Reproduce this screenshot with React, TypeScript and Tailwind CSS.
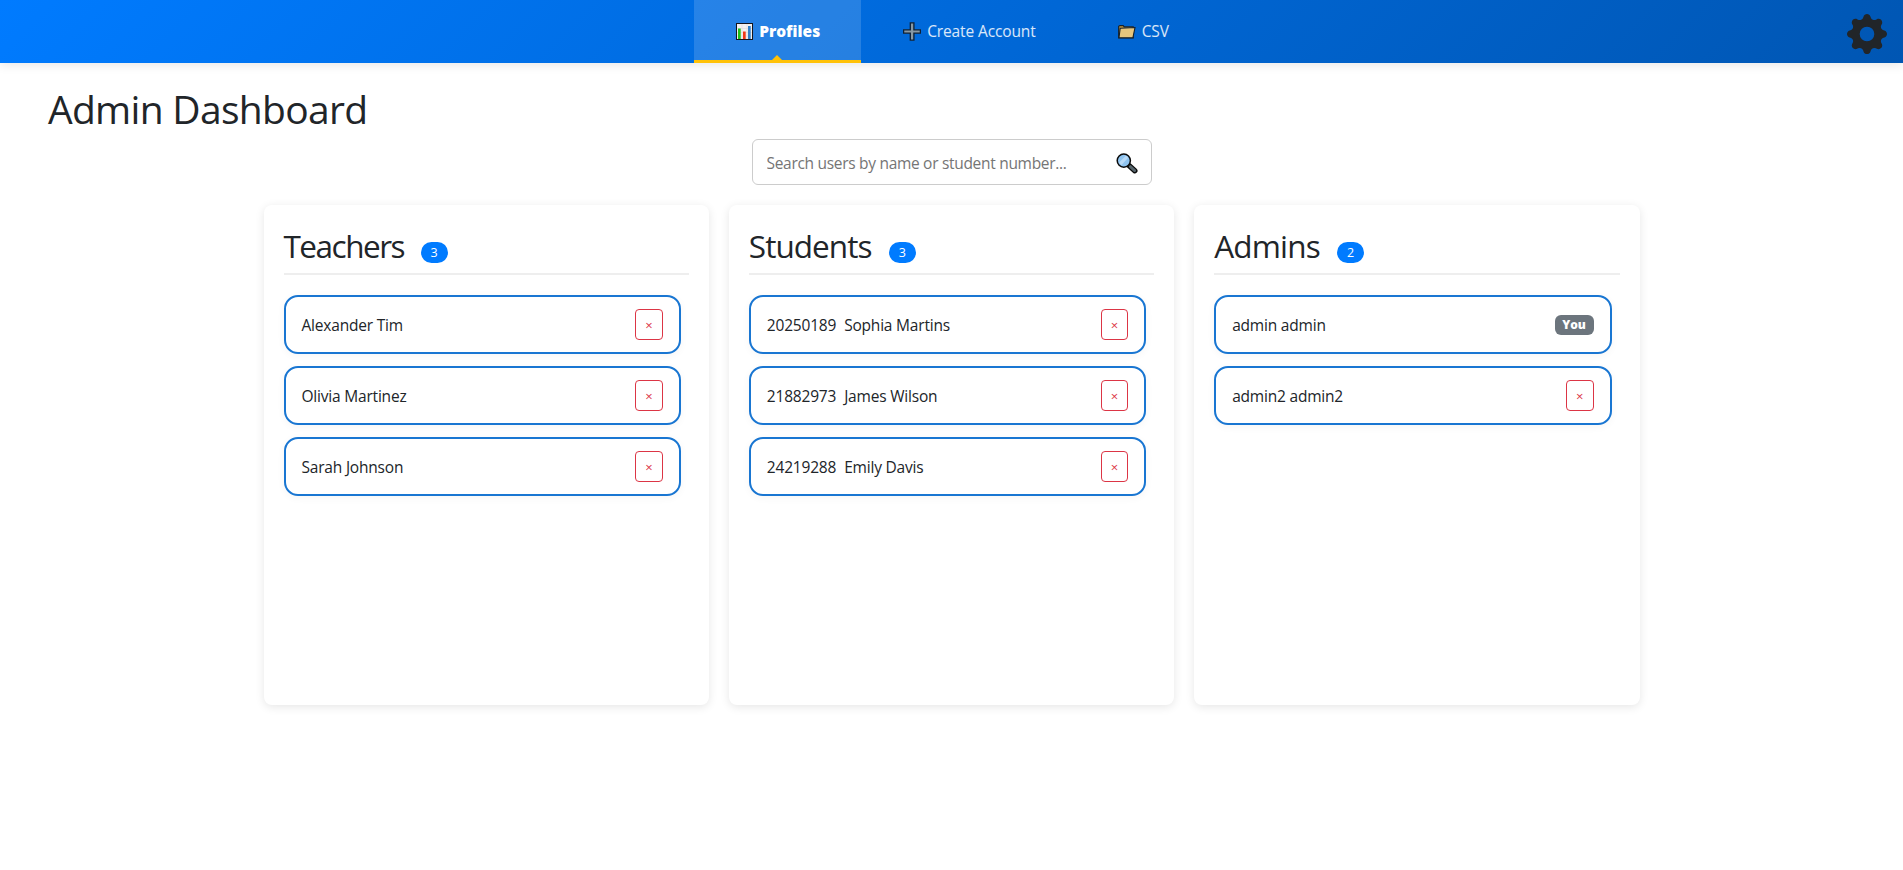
import { BsGearFill } from "react-icons/bs";
import type { ReactNode } from "react";

function ChartIcon() {
  return (
    <svg width="17" height="17" viewBox="0 0 17 17">
      <rect x="0.5" y="0.5" width="16" height="16" fill="#f3f1f1" stroke="#14141c" />
      <path d="M1 5.5h15M1 9.5h15M1 13h15M6 1v15M11 1v15" stroke="#dedcde" strokeWidth="0.6" />
      <rect x="2" y="5.5" width="2.7" height="10.5" fill="#1fc019" />
      <rect x="7" y="8.5" width="2.7" height="7.5" fill="#f03a17" />
      <rect x="12" y="3" width="2.7" height="13" fill="#3180c8" />
    </svg>
  );
}

function PlusIcon() {
  return (
    <svg width="18" height="19" viewBox="0 0 18 19">
      <path
        d="M7.3 .8h3.6v7h6.5v3.4h-6.5v7H7.3v-7H.6V7.8h6.7z"
        fill="#8899a4"
        stroke="#0c2036"
        strokeWidth="1.3"
      />
    </svg>
  );
}

function FolderIcon() {
  return (
    <svg width="18" height="14" viewBox="0 0 18 14">
      <path d="M.7 13V1.3l1.2-.7h3.3l1 1.2h9V13z" fill="#c99a3c" stroke="#14202c" strokeWidth="1.2" />
      <path d="M2.2 3.2 17 2.5 14.9 12.8H1z" fill="#e6c67d" stroke="#14202c" strokeWidth="1.1" />
    </svg>
  );
}

function SearchIcon() {
  return (
    <svg width="22" height="21" viewBox="0 0 22 21">
      <path d="m13 12.5 5.8 5.2" stroke="#0b0b0b" strokeWidth="5.4" strokeLinecap="round" />
      <path d="m14.3 13.6 4.4 4" stroke="#56656c" strokeWidth="2.8" strokeLinecap="round" />
      <circle cx="7.8" cy="7.6" r="6.6" fill="#8fc4f0" stroke="#0b0b0b" strokeWidth="1.5" />
      <path d="M3.2 9.5 9.8 2.8a5.4 5.4 0 0 1 2.4 2L5.5 12a5 5 0 0 1-2.3-2.5z" fill="#b9dbf8" />
    </svg>
  );
}

function Tab({ icon, label, active }: { icon: ReactNode; label: string; active?: boolean }) {
  if (active) {
    return (
      <button className="relative flex h-[63px] w-[167px] items-center border-b-[3px] border-[#ffc107] bg-white/15 pl-[42px] pt-[3px] text-[15.5px] font-extrabold text-white">
        {icon}
        <span className="ml-[6px] whitespace-nowrap pt-px">{label}</span>
        <span className="absolute bottom-0 left-[78px] h-0 w-0 border-x-[5px] border-b-[5px] border-x-transparent border-b-[#ffc107]" />
      </button>
    );
  }
  return (
    <button className="flex h-[63px] items-center pl-[42px] pr-[40px] text-[15.5px] tracking-[-0.12px] text-white/85">
      {icon}
      <span className="ml-[6px] whitespace-nowrap pt-px">{label}</span>
    </button>
  );
}

type Person = { id?: string; name: string; self?: boolean };

function PersonRow({ person }: { person: Person }) {
  return (
    <li className="flex h-[59px] items-center justify-between rounded-[14px] border-2 border-[#1976d2] bg-white px-4 shadow-[0_2px_8px_rgba(0,0,0,0.04)]">
      <span className="flex gap-2 pt-[2px] text-[15.5px] tracking-[-0.2px]">
        {person.id && <span>{person.id}</span>}
        <span>{person.name}</span>
      </span>
      {person.self ? (
        <span className="flex h-5 w-[39px] items-center justify-center rounded-md bg-[#6c757d] pt-px text-[12px] font-extrabold text-white">
          You
        </span>
      ) : (
        <button className="flex h-[31px] w-[27.6px] items-center justify-center rounded border border-[#dc3545] pt-[2px] text-[13px] font-medium text-[#dc3545]">
          ×
        </button>
      )}
    </li>
  );
}

function Column({ title, people, titleClass }: { title: string; people: Person[]; titleClass: string }) {
  return (
    <section className="h-[500px] rounded-lg bg-white p-5 shadow-[0_2px_10px_rgba(0,0,0,0.1)]">
      <div className="flex h-[50px] items-start border-b-2 border-[#eee]">
        <h2 className={titleClass}>{title}</h2>
        <span className="mt-[17px] flex h-[21px] w-[27px] items-center justify-center rounded-xl bg-[#007bff] pt-[2px] text-[12.5px] text-white">
          {people.length}
        </span>
      </div>
      <ul className="mr-2 mt-5 flex flex-col gap-3">
        {people.map((p) => (
          <PersonRow key={p.name} person={p} />
        ))}
      </ul>
    </section>
  );
}

const teachers: Person[] = [{ name: "Alexander Tim" }, { name: "Olivia Martinez" }, { name: "Sarah Johnson" }];
const students: Person[] = [
  { id: "20250189", name: "Sophia Martins" },
  { id: "21882973", name: "James Wilson" },
  { id: "24219288", name: "Emily Davis" },
];
const admins: Person[] = [{ name: "admin admin", self: true }, { name: "admin2 admin2" }];

export default function App() {
  return (
    <div className="min-h-screen bg-white font-['Open_Sans','Noto_Sans',sans-serif] text-[#212529]">
      <header className="relative flex h-[63px] justify-center bg-[linear-gradient(135deg,#007bff,#0056b3)] shadow-[0_2px_10px_rgba(0,0,0,0.1)]">
        <nav className="flex">
          <Tab icon={<ChartIcon />} label="Profiles" active />
          <Tab icon={<PlusIcon />} label="Create Account" />
          <Tab icon={<FolderIcon />} label="CSV" />
        </nav>
        <button className="absolute right-4 top-[14px]" aria-label="Settings">
          <BsGearFill size={40} />
        </button>
      </header>
      <main className="flex flex-col">
        <h1 className="ml-12 mt-[22px] h-[54px] text-[39px] leading-[48px] tracking-[-0.7px]">Admin Dashboard</h1>
        <label className="mx-auto flex h-[46px] w-[400px] items-center rounded-md border border-[#ccc] pl-[14px] pr-[13px] pt-[2px]">
          <input
            className="min-w-0 flex-1 pt-[2px] text-[15.5px] tracking-[-0.3px] outline-none placeholder:text-[#757575]"
            placeholder="Search users by name or student number..."
          />
          <SearchIcon />
        </label>
        <div className="mx-auto mt-5 grid w-[1376px] grid-cols-3 gap-5">
          <Column title="Teachers" people={teachers} titleClass="w-[137px] text-[31.5px] leading-[42px] tracking-[-1.5px]" />
          <Column title="Students" people={students} titleClass="w-[140px] text-[31.5px] leading-[42px] tracking-[-0.95px]" />
          <Column title="Admins" people={admins} titleClass="w-[123px] text-[31.5px] leading-[42px] tracking-[-0.8px]" />
        </div>
      </main>
    </div>
  );
}
